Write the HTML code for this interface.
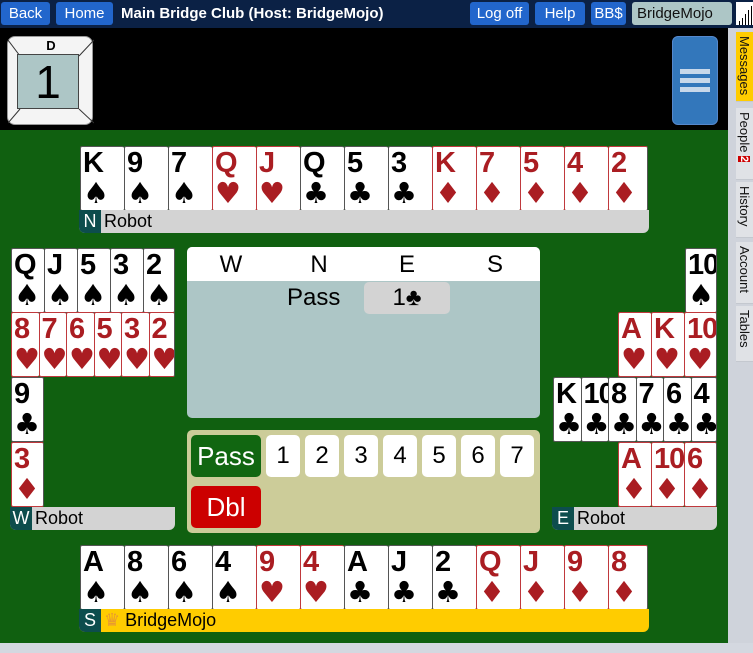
<!DOCTYPE html>
<html><head><meta charset="utf-8"><style>
*{box-sizing:border-box;margin:0;padding:0}
body{width:753px;height:653px;overflow:hidden;background:#d4d8e0;font-family:"Liberation Sans",Arial,sans-serif;position:relative}
.abs{position:absolute}
#top{left:0;top:0;width:753px;height:28px;background:#0b2145}
.btn{position:absolute;top:2px;height:23px;background:#2266cc;color:#fff;font-size:15px;line-height:23px;text-align:center;border-radius:3px}
#black{left:0;top:28px;width:728px;height:102px;background:#000}
#green{left:0;top:130px;width:728px;height:513px;background:#106010}
#side{left:728px;top:28px;width:25px;height:615px;background:#cfd3db}
.tab{position:absolute;left:736px;width:17px;background:#e0e2e6;border-bottom:1px solid #c4c8cf;writing-mode:vertical-rl;font-size:13px;color:#111;padding-top:4px;line-height:17px}
.row{position:absolute;display:flex}
.c{background:#fff;border:1px solid #555;border-radius:2px;height:65px;position:relative;overflow:hidden;border-right:none}
.c:last-child{border-right:1px solid #555}
.c b{position:absolute;left:2px;top:1px;font-size:29px;font-weight:bold;line-height:30px;letter-spacing:-1px}
.c i{position:absolute;left:2px;top:31px;font-style:normal;font-size:29px;line-height:30px;font-family:"DejaVu Sans",sans-serif}
.r{color:#aa1d22;border-color:#c0393d}
.k{color:#000}
.bar{position:absolute;height:23px;background:#d3d3d3;border-radius:0 0 6px 6px;font-size:18px;line-height:23px;overflow:hidden}
.bar span.s{display:inline-block;width:22px;height:23px;background:#0d4d4d;color:#fff;text-align:center;margin-right:3px}
.nb{position:absolute;top:435px;width:34px;height:42px;background:#fff;border-radius:5px;font-size:24px;line-height:42px;text-align:center}
</style></head><body>
<div id="top" class="abs"></div>
<div class="btn" style="left:1px;width:49px">Back</div>
<div class="btn" style="left:56px;width:57px">Home</div>
<div class="abs" style="left:121px;top:2px;color:#fff;font-weight:bold;font-size:15px;line-height:23px">Main Bridge Club (Host: BridgeMojo)</div>
<div class="btn" style="left:470px;width:59px">Log off</div>
<div class="btn" style="left:535px;width:50px">Help</div>
<div class="btn" style="left:591px;width:35px">BB$</div>
<div class="btn" style="left:632px;width:100px;background:#adc6c6;color:#111;text-align:left;padding-left:5px">BridgeMojo</div>
<div class="abs" style="left:736px;top:2px;width:17px;height:23px;background:#fff"><svg width="17" height="23"><g stroke="#000" stroke-width="1"><line x1="3.5" y1="23" x2="3.5" y2="19"/><line x1="6.5" y1="23" x2="6.5" y2="16"/><line x1="9.5" y1="23" x2="9.5" y2="12"/><line x1="12.5" y1="23" x2="12.5" y2="8"/><line x1="15.5" y1="23" x2="15.5" y2="4"/></g></svg></div>
<div id="black" class="abs"></div>
<div id="green" class="abs"></div>
<div id="side" class="abs"></div>
<div class="tab" style="top:32px;height:70px;background:#ffcc00">Messages</div>
<div class="tab" style="top:108px;height:72px">People <span style="background:#c00;color:#fff;font-weight:bold;font-size:11px">2</span></div>
<div class="tab" style="top:182px;height:56px">History</div>
<div class="tab" style="top:242px;height:62px">Account</div>
<div class="tab" style="top:306px;height:56px">Tables</div>

<!-- board -->
<div class="abs" style="left:7px;top:36px;width:86px;height:89px;background:#f4f4f4;border-radius:8px;border:1px solid #999">
<svg class="abs" style="left:0;top:0" width="86" height="89"><g stroke="#333" stroke-width="1"><line x1="0" y1="3" x2="12" y2="19"/><line x1="86" y1="3" x2="71" y2="19"/><line x1="0" y1="86" x2="12" y2="72"/><line x1="86" y1="86" x2="71" y2="72"/></g></svg>
<div class="abs" style="left:0;top:1px;width:86px;text-align:center;font-weight:bold;font-size:13px">D</div>
<div class="abs" style="left:9px;top:17px;width:62px;height:55px;background:#adc6c6;border:1px solid #444;font-size:46px;text-align:center;line-height:55px">1</div>
</div>
<div class="abs" style="left:672px;top:36px;width:46px;height:89px;background:#3377bb;border-radius:6px;border:1px solid #5588cc">
<div class="abs" style="left:7px;top:32px;width:30px;height:5px;background:#c8d8ea"></div>
<div class="abs" style="left:7px;top:41px;width:30px;height:5px;background:#c8d8ea"></div>
<div class="abs" style="left:7px;top:50px;width:30px;height:5px;background:#c8d8ea"></div>
</div>

<!-- North -->
<div class="row" style="left:80px;top:146px">
<div class="c k" style="width:44px"><b>K</b><i>♠</i></div><div class="c k" style="width:44px"><b>9</b><i>♠</i></div><div class="c k" style="width:44px"><b>7</b><i>♠</i></div><div class="c r" style="width:44px"><b>Q</b><i>♥</i></div><div class="c r" style="width:44px"><b>J</b><i>♥</i></div><div class="c k" style="width:44px"><b>Q</b><i>♣</i></div><div class="c k" style="width:44px"><b>5</b><i>♣</i></div><div class="c k" style="width:44px"><b>3</b><i>♣</i></div><div class="c r" style="width:44px"><b>K</b><i>♦</i></div><div class="c r" style="width:44px"><b>7</b><i>♦</i></div><div class="c r" style="width:44px"><b>5</b><i>♦</i></div><div class="c r" style="width:44px"><b>4</b><i>♦</i></div><div class="c r" style="width:40px"><b>2</b><i>♦</i></div>
</div>
<div class="bar" style="left:79px;top:210px;width:570px"><span class="s">N</span>Robot</div>

<!-- West -->
<div class="row" style="left:11px;top:248px"><div class="c k" style="width:33px"><b>Q</b><i>♠</i></div><div class="c k" style="width:33px"><b>J</b><i>♠</i></div><div class="c k" style="width:33px"><b>5</b><i>♠</i></div><div class="c k" style="width:33px"><b>3</b><i>♠</i></div><div class="c k" style="width:32px"><b>2</b><i>♠</i></div></div>
<div class="row" style="left:11px;top:312px"><div class="c r" style="width:27.5px"><b>8</b><i>♥</i></div><div class="c r" style="width:27.5px"><b>7</b><i>♥</i></div><div class="c r" style="width:27.5px"><b>6</b><i>♥</i></div><div class="c r" style="width:27.5px"><b>5</b><i>♥</i></div><div class="c r" style="width:27.5px"><b>3</b><i>♥</i></div><div class="c r" style="width:26.5px"><b>2</b><i>♥</i></div></div>
<div class="row" style="left:11px;top:377px"><div class="c k" style="width:33px"><b>9</b><i>♣</i></div></div>
<div class="row" style="left:11px;top:442px"><div class="c r" style="width:33px"><b>3</b><i>♦</i></div></div>
<div class="bar" style="left:10px;top:507px;width:165px"><span class="s">W</span>Robot</div>

<!-- East -->
<div class="row" style="left:685px;top:248px"><div class="c k" style="width:32px"><b>10</b><i>♠</i></div></div>
<div class="row" style="left:618px;top:312px"><div class="c r" style="width:33px"><b>A</b><i>♥</i></div><div class="c r" style="width:33px"><b>K</b><i>♥</i></div><div class="c r" style="width:33px"><b>10</b><i>♥</i></div></div>
<div class="row" style="left:553px;top:377px"><div class="c k" style="width:27.5px"><b>K</b><i>♣</i></div><div class="c k" style="width:27.5px"><b>10</b><i>♣</i></div><div class="c k" style="width:27.5px"><b>8</b><i>♣</i></div><div class="c k" style="width:27.5px"><b>7</b><i>♣</i></div><div class="c k" style="width:27.5px"><b>6</b><i>♣</i></div><div class="c k" style="width:26.5px"><b>4</b><i>♣</i></div></div>
<div class="row" style="left:618px;top:442px"><div class="c r" style="width:33px"><b>A</b><i>♦</i></div><div class="c r" style="width:33px"><b>10</b><i>♦</i></div><div class="c r" style="width:33px"><b>6</b><i>♦</i></div></div>
<div class="bar" style="left:552px;top:507px;width:165px"><span class="s">E</span>Robot</div>

<!-- South -->
<div class="row" style="left:80px;top:545px">
<div class="c k" style="width:44px"><b>A</b><i>♠</i></div><div class="c k" style="width:44px"><b>8</b><i>♠</i></div><div class="c k" style="width:44px"><b>6</b><i>♠</i></div><div class="c k" style="width:44px"><b>4</b><i>♠</i></div><div class="c r" style="width:44px"><b>9</b><i>♥</i></div><div class="c r" style="width:44px"><b>4</b><i>♥</i></div><div class="c k" style="width:44px"><b>A</b><i>♣</i></div><div class="c k" style="width:44px"><b>J</b><i>♣</i></div><div class="c k" style="width:44px"><b>2</b><i>♣</i></div><div class="c r" style="width:44px"><b>Q</b><i>♦</i></div><div class="c r" style="width:44px"><b>J</b><i>♦</i></div><div class="c r" style="width:44px"><b>9</b><i>♦</i></div><div class="c r" style="width:40px"><b>8</b><i>♦</i></div>
</div>
<div class="bar" style="left:79px;top:609px;width:570px;background:#ffcc00"><span class="s">S</span><span style="color:#e89a30">♛</span> BridgeMojo</div>

<!-- bidding -->
<div class="abs" style="left:187px;top:247px;width:353px;height:171px;background:#adc6c6;border-radius:5px;overflow:hidden">
<div style="height:34px;background:#fff;display:flex;font-size:24px;line-height:36px"><div style="width:88px;text-align:center">W</div><div style="width:88px;text-align:center">N</div><div style="width:88px;text-align:center">E</div><div style="width:88px;text-align:center">S</div></div>
<div class="abs" style="left:100px;top:35px;font-size:24px;line-height:32px">Pass</div>
<div class="abs" style="left:177px;top:35px;width:86px;height:32px;background:#d3d3d3;border-radius:5px;font-size:24px;line-height:32px;text-align:center">1♣</div>
</div>
<div class="abs" style="left:187px;top:430px;width:353px;height:103px;background:#cccc99;border-radius:5px"></div>
<div class="abs" style="left:191px;top:435px;width:70px;height:42px;background:#116611;color:#fff;border-radius:5px;font-size:26px;line-height:42px;text-align:center">Pass</div>
<div class="abs" style="left:191px;top:486px;width:70px;height:42px;background:#cc0000;color:#fff;border-radius:5px;font-size:26px;line-height:42px;text-align:center">Dbl</div>
<div class="nb" style="left:266px">1</div><div class="nb" style="left:305px">2</div><div class="nb" style="left:344px">3</div><div class="nb" style="left:383px">4</div><div class="nb" style="left:422px">5</div><div class="nb" style="left:461px">6</div><div class="nb" style="left:500px">7</div>
</body></html>
